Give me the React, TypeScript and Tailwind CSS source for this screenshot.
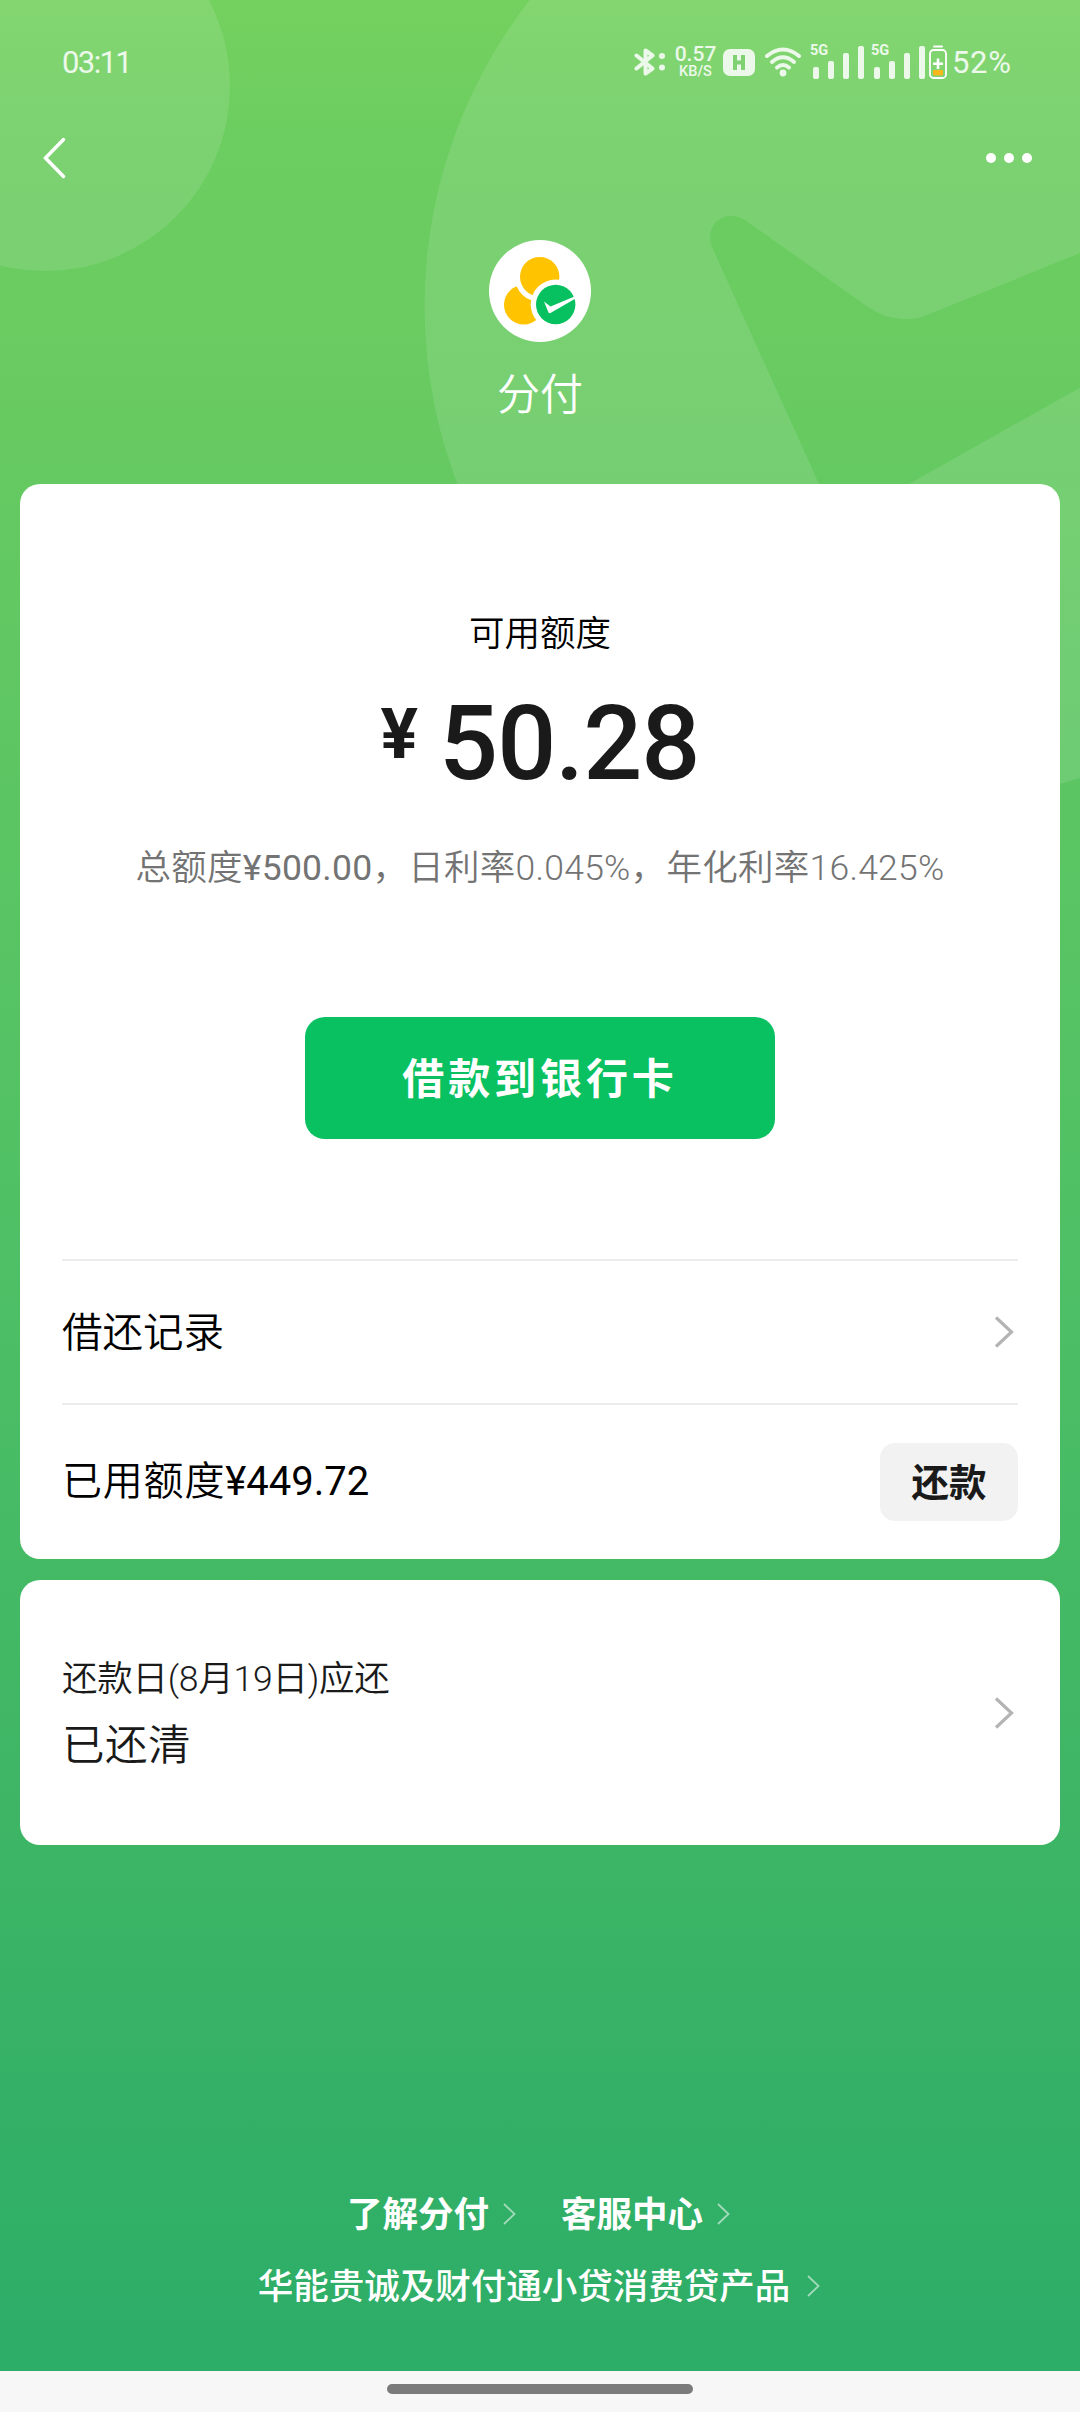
import React from 'react';

const signalBars = ['h-[12px]', 'h-[18px]', 'h-[26px]', 'h-[33px]'];

const BackgroundShapes = () => (
  <svg className="absolute inset-0" width="1080" height="2371" viewBox="0 0 1080 2371" fill="none">
    <defs>
      <mask id="tick">
        <rect width="1080" height="900" fill="white" />
        <path
          d="M712 247C704 226 723 207 745 220L865 305Q893 325 922 317L1090 249V382L909 484L860 580L819 484Z"
          fill="black"
        />
      </mask>
    </defs>
    <circle cx="45" cy="86" r="185" fill="white" fillOpacity="0.11" />
    <circle cx="922" cy="306" r="497.5" fill="white" fillOpacity="0.11" mask="url(#tick)" />
  </svg>
);

const BluetoothIcon = () => (
  <svg width="32" height="30" viewBox="0 0 32 30" fill="none" stroke="currentColor" strokeWidth="4" strokeLinejoin="round" strokeLinecap="round">
    <path d="M2.5 8.5L18.5 21.5L11.5 26.5V3.5L18.5 8.5L2.5 21.5" />
    <circle cx="28" cy="9" r="3" fill="currentColor" stroke="none" />
    <circle cx="28" cy="20.5" r="3" fill="currentColor" stroke="none" />
  </svg>
);

const WifiIcon = () => (
  <svg width="38" height="30" viewBox="0 0 38 30" fill="none" stroke="currentColor" strokeWidth="4" strokeLinecap="round">
    <path d="M3 9Q19 -4 35 9" />
    <path d="M8 15Q19 5.5 30 15" />
    <path d="M13 20.5Q19 15.5 25 20.5" />
    <circle cx="19" cy="26" r="3.4" fill="currentColor" stroke="none" />
  </svg>
);

const BatteryIcon = () => (
  <svg width="18" height="34" viewBox="0 0 18 34" fill="none">
    <path d="M5 1.5H13" stroke="white" strokeWidth="2" strokeLinecap="round" />
    <rect x="1" y="5" width="16" height="28" rx="3.5" stroke="white" strokeWidth="1.8" />
    <path d="M4 25H14V29Q14 30.5 12.5 30.5H5.5Q4 30.5 4 29Z" fill="#fbb81c" />
    <path d="M9 13.5V24M4 18.7H14" stroke="white" strokeWidth="2.6" />
  </svg>
);

const Signal = () => (
  <div className="relative flex h-[34px] w-[51px] items-end gap-[9px]">
    <span className="absolute -left-[3px] -top-px text-[14.5px] font-bold leading-[14px]">5G</span>
    {signalBars.map((h) => (
      <span key={h} className={`w-[6px] rounded-[2px] bg-current ${h}`} />
    ))}
  </div>
);

const StatusBar = () => (
  <div className="flex h-[124px] items-center pl-[62px] pr-[65px] text-white/85">
    <span className="pt-[2px] text-[31px] tracking-[-1.6px]">03:11</span>
    <div className="ml-auto flex items-center">
      <BluetoothIcon />
      <div className="ml-[8px] flex w-[43px] flex-col items-center">
        <span className="h-[18px] text-[21px] font-medium leading-[17px]">0.57</span>
        <span className="h-[14px] text-[14.5px] font-medium leading-[15px]">KB/S</span>
      </div>
      <div className="ml-[6px] flex h-[27px] w-[32px] items-center justify-center rounded-[7px] bg-current">
        <svg width="14" height="17" viewBox="0 0 14 17" fill="none" stroke="#7fd172" strokeWidth="4">
          <path d="M3 1V16M11 1V16M3 8.5H11" />
        </svg>
      </div>
      <div className="ml-[9px]">
        <WifiIcon />
      </div>
      <div className="ml-[11px]">
        <Signal />
      </div>
      <div className="ml-[10px]">
        <Signal />
      </div>
      <div className="ml-[4px]">
        <BatteryIcon />
      </div>
      <span className="ml-[5px] w-[63px] whitespace-nowrap pt-[2px] text-[31px] tracking-[0.7px]">52%</span>
    </div>
  </div>
);

const NavBar = () => (
  <div className="flex h-[68px] items-center justify-between pl-[42px] pr-[48px] text-white">
    <svg width="24" height="44" viewBox="0 0 24 44" fill="none" stroke="currentColor" strokeWidth="3.5" strokeLinecap="round">
      <path d="M21.5 3.5L3.5 22L21.5 40.5" />
    </svg>
    <div className="flex gap-[8px]">
      <span className="size-[10px] rounded-full bg-current" />
      <span className="size-[10px] rounded-full bg-current" />
      <span className="size-[10px] rounded-full bg-current" />
    </div>
  </div>
);

const Logo = () => (
  <svg width="102" height="102" viewBox="0 0 102 102">
    <circle cx="51" cy="51" r="51" fill="white" />
    <circle cx="34.7" cy="64.7" r="19.7" fill="#ffc300" />
    <circle cx="50.7" cy="36.7" r="25" fill="white" />
    <circle cx="50.7" cy="36.7" r="19.7" fill="#ffc300" />
    <circle cx="66.7" cy="64.5" r="25" fill="white" />
    <circle cx="66.7" cy="64.5" r="19.7" fill="#07c160" />
    <path d="M55 61.5L61.5 66.5L85.5 56.5L87 58.3L61 73.2L59.6 72.8Z" fill="white" />
  </svg>
);

const ChevronRight = () => (
  <svg width="22" height="36" viewBox="0 0 22 36" fill="none" stroke="#b4b4b4" strokeWidth="3.2">
    <path d="M3 3.5L18.5 18L3 32.5" />
  </svg>
);

const LinkArrow = () => (
  <svg className="-mt-[5px]" width="13" height="24" viewBox="0 0 13 24" fill="none" stroke="white" strokeOpacity="0.55" strokeWidth="1.8">
    <path d="M1 2L11.5 12L1 22" />
  </svg>
);

const App = () => {
  return (
    <div
      className="flex h-[2412px] w-[1080px] flex-col overflow-hidden bg-[#f7f7f7]"
      style={{ fontFamily: 'Roboto, "Noto Sans CJK SC", sans-serif' }}
    >
      <main className="relative h-[2371px] bg-[linear-gradient(180deg,#74d15f_0%,#6ccd60_6%,#69cb61_15%,#4fc065_52%,#3db565_77%,#2cad68_100%)]">
        <BackgroundShapes />

        <div className="relative flex h-full flex-col">
          <StatusBar />
          <NavBar />

          {/* Brand */}
          <div className="flex h-[292px] flex-col items-center pt-[48px]">
            <Logo />
            <h1 className="mt-[23px] text-[43px] font-[350] leading-[60px] text-white">分付</h1>
          </div>

          {/* Available credit */}
          <section className="mx-5 h-[1075px] rounded-[20px] bg-white px-[42px]">
            <div className="flex h-[777px] flex-col items-center border-b-2 border-[#ebebeb] pt-[125px]">
              <p className="text-[35.5px] font-[350] leading-[50px] text-black">可用额度</p>
              <div className="mt-[25px] flex h-[120px] text-[#1a1a1a]">
                <span className="mr-[21px] text-[70px] font-bold leading-[101px]">¥</span>
                <span className="text-[104px] font-medium leading-[120px] tracking-[-1px]">50.28</span>
              </div>
              <p className="mt-[39px] whitespace-nowrap text-[35.5px] font-[350] leading-[50px] tracking-[0.27px] text-[#737373]">
                总额度<span className="font-normal">¥500.00</span>，日利率0.045%，年化利率16.425%
              </p>
              <button className="mt-[124px] h-[122px] w-[470px] rounded-[20px] bg-[#09c160] pt-[2px] text-[42px] font-bold tracking-[3.9px] text-white">
                借款到银行卡
              </button>
            </div>
            <div className="flex h-[144px] items-center justify-between border-b-2 border-[#ebebeb] pr-[3px]">
              <span className="pt-[3px] text-[40.5px] font-[350] text-black">借还记录</span>
              <ChevronRight />
            </div>
            <div className="flex h-[154px] items-center justify-between">
              <span className="text-[40px] text-black">
                <span className="font-[350] tracking-[0.8px]">已用额度</span>¥449.72
              </span>
              <button className="h-[78px] w-[138px] rounded-[15px] bg-[#f2f2f2] pt-[2px] text-[37.5px] font-bold text-[#1a1a1a]">
                还款
              </button>
            </div>
          </section>

          {/* Repayment */}
          <section className="mx-5 mt-[21px] flex h-[265px] items-center justify-between rounded-[20px] bg-white pl-[42px] pr-[45px] text-[#1a1a1a]">
            <div className="pt-[6px]">
              <p className="text-[35.5px] font-[350] leading-[60px] tracking-[-0.25px]">还款日(8月19日)应还</p>
              <p className="text-[42.5px] font-[350] leading-[74px] tracking-[0.5px]">已还清</p>
            </div>
            <ChevronRight />
          </section>

          {/* Footer links */}
          <footer className="mt-auto flex h-[191px] flex-col items-center text-[35.5px] text-white">
            <div className="mr-[3px] flex h-[72px] items-center gap-[45px] font-bold">
              <a className="flex items-center gap-[14px]">
                了解分付
                <LinkArrow />
              </a>
              <a className="flex items-center gap-[14px]">
                客服中心
                <LinkArrow />
              </a>
            </div>
            <a className="mr-[2px] flex h-[72px] items-center gap-[17px] font-medium">
              华能贵诚及财付通小贷消费贷产品
              <LinkArrow />
            </a>
          </footer>
        </div>
      </main>

      <div className="flex flex-1 justify-center pt-[13px]">
        <span className="h-[10px] w-[306px] rounded-full bg-[#7b7b7b]" />
      </div>
    </div>
  );
};

export default App;
